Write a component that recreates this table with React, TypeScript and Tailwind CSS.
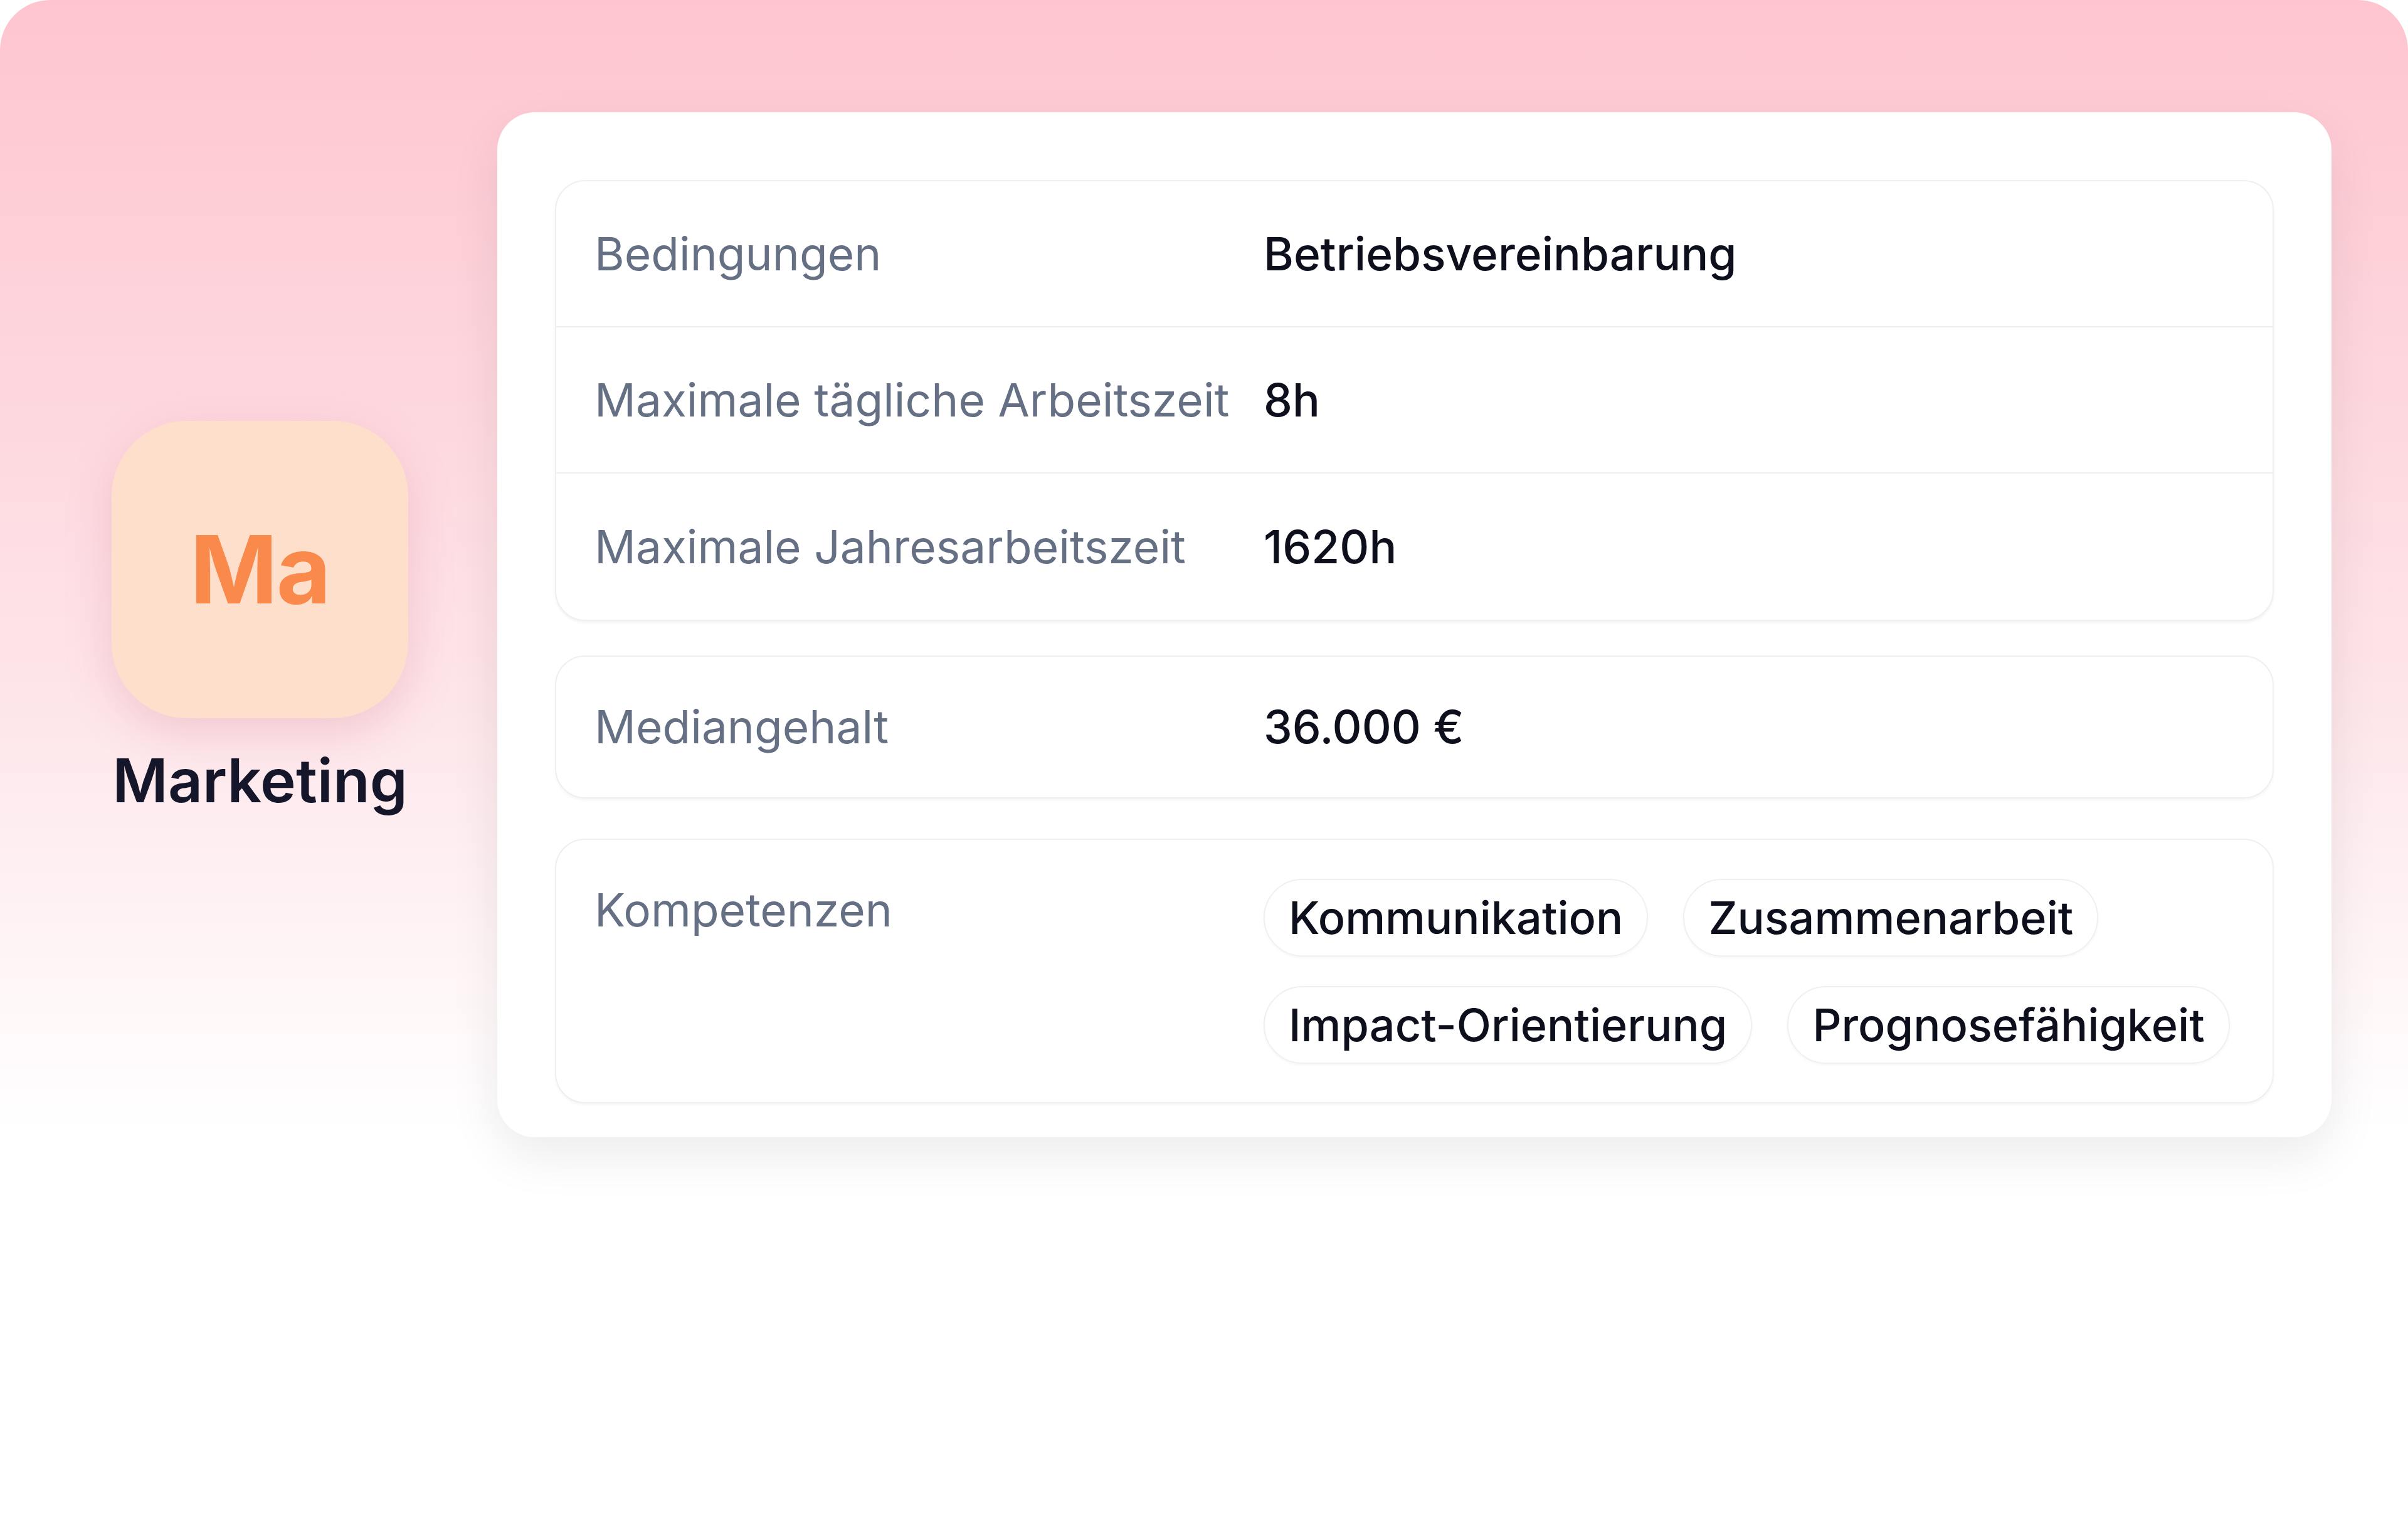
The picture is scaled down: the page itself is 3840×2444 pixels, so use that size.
const rows = [
  { label: 'Bedingungen', value: 'Betriebsvereinbarung' },
  { label: 'Maximale tägliche Arbeitszeit', value: '8h' },
  { label: 'Maximale Jahresarbeitszeit', value: '1620h' },
];

const skills = ['Kommunikation', 'Zusammenarbeit', 'Impact-Orientierung', 'Prognosefähigkeit'];

function Label({ children }: { children: React.ReactNode }) {
  return <span className="w-[1067px] shrink-0 text-[73px] leading-[96px] font-normal text-[#667085]">{children}</span>;
}

function Value({ children }: { children: React.ReactNode }) {
  return <span className="text-[73px] leading-[96px] font-medium text-[#0d0f1c]">{children}</span>;
}

export default function App() {
  return (
    <div className="w-[3840px] h-[2444px] bg-white font-['Inter','Noto_Sans',sans-serif] antialiased">
      <div className="flex h-[1900px] rounded-t-[80px] bg-gradient-to-b from-[#fec5cf] via-[#fde3e8] via-55% to-white to-95% pl-[178px] pt-[179px]">
        {/* Team badge */}
        <div className="mt-[492px] flex w-[473px] shrink-0 flex-col items-center self-start">
          <div className="flex h-[474px] w-[473px] items-center justify-center rounded-[120px] bg-[#fedfcb] shadow-[0_24px_70px_rgba(214,120,140,0.28)]">
            <span className="text-[150px] leading-none font-bold tracking-[-2px] text-[#f98a4b]">Ma</span>
          </div>
          <p className="mt-[42px] text-[96px] leading-[115px] font-semibold text-[#16162a]">Marketing</p>
        </div>

        {/* Details card */}
        <div className="ml-[142px] h-[1634px] w-[2925px] shrink-0 self-start rounded-[60px] bg-white px-[92px] pt-[108px] pb-[54px] shadow-[0_30px_80px_rgba(0,0,0,0.08)]">
          <div className="divide-y-2 divide-[#efefef] rounded-[48px] border-2 border-[#efefef] shadow-[0_3px_4px_rgba(0,0,0,0.05)]">
            {rows.map((r) => (
              <div key={r.label} className="flex h-[233px] items-center pl-[61px]">
                <Label>{r.label}</Label>
                <Value>{r.value}</Value>
              </div>
            ))}
          </div>

          <div className="mt-[55px] flex h-[228px] items-center rounded-[48px] border-2 border-[#efefef] pl-[61px] shadow-[0_3px_4px_rgba(0,0,0,0.04)]">
            <Label>Mediangehalt</Label>
            <Value>36.000 €</Value>
          </div>

          <div className="mt-[64px] flex items-start rounded-[48px] border-2 border-[#efefef] pt-[62px] pb-[61px] pl-[61px] shadow-[0_3px_4px_rgba(0,0,0,0.04)]">
            <span className="w-[1067px] shrink-0 pt-[2px] text-[73px] leading-[96px] font-normal text-[#667085]">Kompetenzen</span>
            <div className="flex flex-wrap gap-x-[56px] gap-y-[47px]">
              {skills.map((s) => (
                <span
                  key={s}
                  className="flex h-[124px] items-center rounded-full border-2 border-[#f0f0f0] px-[38px] text-[72px] leading-[96px] font-medium text-[#0d0f1c] shadow-[0_2px_4px_rgba(0,0,0,0.04)]"
                >
                  {s}
                </span>
              ))}
            </div>
          </div>
        </div>
      </div>
    </div>
  );
}
